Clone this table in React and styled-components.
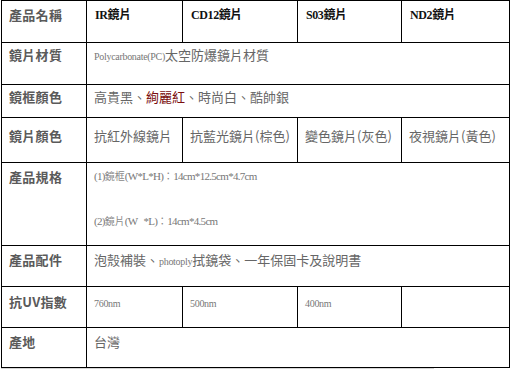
import styled, { createGlobalStyle } from "styled-components";

const Global = createGlobalStyle`
  body {
    margin: 0;
    background: #fff;
  }
`;

const Page = styled.div`
  padding-left: 1px;
`;

const SpecTable = styled.table`
  border-collapse: collapse;
  table-layout: fixed;
  width: 508px;
  font-family: "Noto Sans CJK TC", sans-serif;
`;

const Row = styled.tr`
  height: ${(p) => p.$h}px;
`;

const Label = styled.th`
  border: 1px solid #000;
  vertical-align: top;
  text-align: left;
  padding: ${(p) => p.$pt}px 6px 0 7px;
  font-size: 13px;
  line-height: 16px;
  font-weight: 700;
  color: #5a5a5a;
  letter-spacing: 0.3px;
`;

const Head = styled.th`
  border: 1px solid #000;
  vertical-align: top;
  text-align: left;
  padding: ${(p) => p.$pt}px 6px 0 8px;
  font-family: "Liberation Serif", "Noto Sans CJK TC", serif;
  font-size: 12px;
  line-height: 16px;
  font-weight: 700;
  color: #111;
  letter-spacing: -0.4px;
`;

const Cell = styled.td`
  border: 1px solid #000;
  vertical-align: top;
  padding: ${(p) => p.$pt}px 6px 0 7px;
  font-size: 13px;
  line-height: 16px;
  color: #666;
  white-space: nowrap;
`;

const Small = styled.span`
  font-family: "Liberation Serif", serif;
  font-size: ${(p) => p.$size || 10}px;
  letter-spacing: ${(p) => (p.$size ? -0.7 : -0.3)}px;
  color: #777;
`;

const Red = styled.span`
  color: #7a0d0d;
`;

const SpecLine = styled.div`
  color: #888;
  font-size: 10px;
  & + & {
    margin-top: 29px;
  }
`;

const ScrollHint = styled.div`
  width: 433px;
  height: 2px;
  background: #d4d4d4;
`;

export default function App() {
  return (
    <Page>
      <Global />
      <SpecTable>
        <colgroup>
          <col style={{ width: 85 }} />
          <col style={{ width: 96 }} />
          <col style={{ width: 115 }} />
          <col style={{ width: 104 }} />
          <col style={{ width: 108 }} />
        </colgroup>
        <tbody>
          <Row $h={42}>
            <Label $pt={6}>產品名稱</Label>
            <Head $pt={6}>IR鏡片</Head>
            <Head $pt={6}>CD12鏡片</Head>
            <Head $pt={6}>S03鏡片</Head>
            <Head $pt={6}>ND2鏡片</Head>
          </Row>
          <Row $h={42}>
            <Label $pt={4}>鏡片材質</Label>
            <Cell colSpan={4} $pt={4}>
              <Small>Polycarbonate(PC)</Small>太空防爆鏡片材質
            </Cell>
          </Row>
          <Row $h={33}>
            <Label $pt={4}>鏡框顏色</Label>
            <Cell colSpan={4} $pt={4}>
              高貴黑、<Red>絢麗紅</Red>、時尚白、酷帥銀
            </Cell>
          </Row>
          <Row $h={45}>
            <Label $pt={10}>鏡片顏色</Label>
            <Cell $pt={10}>抗紅外線鏡片</Cell>
            <Cell $pt={10}>抗藍光鏡片(棕色)</Cell>
            <Cell $pt={10}>變色鏡片(灰色)</Cell>
            <Cell $pt={10}>夜視鏡片(黃色)</Cell>
          </Row>
          <Row $h={83}>
            <Label $pt={6}>產品規格</Label>
            <Cell colSpan={4} $pt={5}>
              <SpecLine>
                <Small $size={11}>(1)</Small>鏡框<Small $size={11}>(W*L*H)</Small>：
                <Small $size={11}>14cm*12.5cm*4.7cm</Small>
              </SpecLine>
              <SpecLine>
                <Small $size={11}>(2)</Small>鏡片<Small $size={11}>(W&nbsp;&nbsp;&nbsp;*L)</Small>：
                <Small $size={11}>14cm*4.5cm</Small>
              </SpecLine>
            </Cell>
          </Row>
          <Row $h={41}>
            <Label $pt={6}>產品配件</Label>
            <Cell colSpan={4} $pt={6}>
              泡殼補裝、<Small>photoply</Small>拭鏡袋、一年保固卡及說明書
            </Cell>
          </Row>
          <Row $h={41}>
            <Label $pt={7}>抗UV指數</Label>
            <Cell $pt={7}>
              <Small>760nm</Small>
            </Cell>
            <Cell $pt={7}>
              <Small>500nm</Small>
            </Cell>
            <Cell $pt={7}>
              <Small>400nm</Small>
            </Cell>
            <Cell $pt={7} />
          </Row>
          <Row $h={40}>
            <Label $pt={6}>產地</Label>
            <Cell colSpan={4} $pt={6}>
              台灣
            </Cell>
          </Row>
        </tbody>
      </SpecTable>
      <ScrollHint />
    </Page>
  );
}
